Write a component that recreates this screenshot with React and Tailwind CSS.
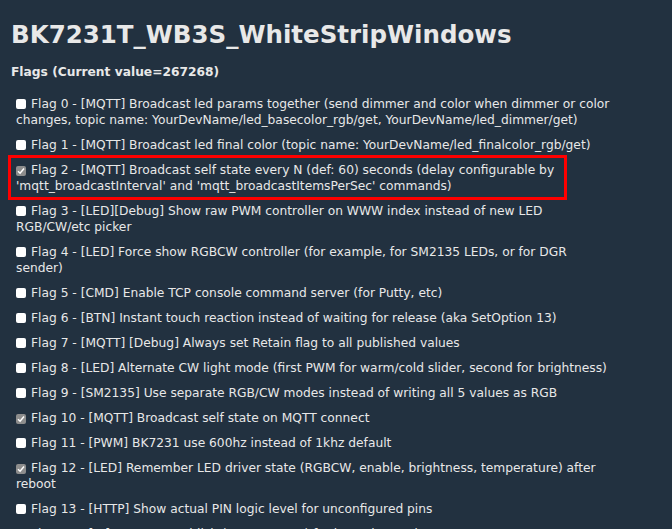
import React from 'react';

const flags = [
  { n: 0, on: false, text: '[MQTT] Broadcast led params together (send dimmer and color when dimmer or color changes, topic name: YourDevName/led_basecolor_rgb/get, YourDevName/led_dimmer/get)' },
  { n: 1, on: false, text: '[MQTT] Broadcast led final color (topic name: YourDevName/led_finalcolor_rgb/get)' },
  { n: 2, on: true, text: "[MQTT] Broadcast self state every N (def: 60) seconds (delay configurable by 'mqtt_broadcastInterval' and 'mqtt_broadcastItemsPerSec' commands)" },
  { n: 3, on: false, text: '[LED][Debug] Show raw PWM controller on WWW index instead of new LED RGB/CW/etc picker' },
  { n: 4, on: false, text: '[LED] Force show RGBCW controller (for example, for SM2135 LEDs, or for DGR sender)' },
  { n: 5, on: false, text: '[CMD] Enable TCP console command server (for Putty, etc)' },
  { n: 6, on: false, text: '[BTN] Instant touch reaction instead of waiting for release (aka SetOption 13)' },
  { n: 7, on: false, text: '[MQTT] [Debug] Always set Retain flag to all published values' },
  { n: 8, on: false, text: '[LED] Alternate CW light mode (first PWM for warm/cold slider, second for brightness)' },
  { n: 9, on: false, text: '[SM2135] Use separate RGB/CW modes instead of writing all 5 values as RGB' },
  { n: 10, on: true, text: '[MQTT] Broadcast self state on MQTT connect' },
  { n: 11, on: false, text: '[PWM] BK7231 use 600hz instead of 1khz default' },
  { n: 12, on: true, text: '[LED] Remember LED driver state (RGBCW, enable, brightness, temperature) after reboot' },
  { n: 13, on: false, text: '[HTTP] Show actual PIN logic level for unconfigured pins' },
  { n: 14, on: false, text: '[IR] Do MQTT publish (RAW STRING) for incoming IR data' },
];

function Box({ on }) {
  if (on) {
    return (
      <span className="inline-flex w-[10px] h-[10px] rounded-[2px] bg-[#8d8d8d] items-center justify-center mr-[5px] translate-y-[1px]">
        <svg width="8" height="8" viewBox="0 0 8 8">
          <path d="M1 4.2 L3.1 6.2 L7 1.6" stroke="#fff" strokeWidth="1.5" fill="none" />
        </svg>
      </span>
    );
  }
  return <span className="inline-block w-[10px] h-[10px] rounded-[2px] bg-white mr-[5px] translate-y-[1px]" />;
}

export default function App() {
  return (
    <div className="relative min-h-screen bg-[#223140] text-[#e8e8e8] font-['DejaVu_Sans',sans-serif] pl-[11px] pt-[19px] overflow-hidden">
      <h1 className="text-[24.5px] leading-[32px] font-bold">BK7231T_WB3S_WhiteStripWindows</h1>
      <h3 className="mt-[13px] text-[12.25px] leading-[16px] font-bold">Flags (Current value=267268)</h3>
      <div className="mt-[16px] pl-[5px] w-[602px] flex flex-col gap-[9px] text-[12.25px] leading-[16px]">
        {flags.map(f => (
          <div key={f.n}>
            <Box on={f.on} />
            Flag {f.n} - {f.text}
          </div>
        ))}
      </div>
      <div className="absolute left-[8px] top-[155px] w-[559px] h-[45px] border-[3px] border-[#ff0000]" />
    </div>
  );
}
